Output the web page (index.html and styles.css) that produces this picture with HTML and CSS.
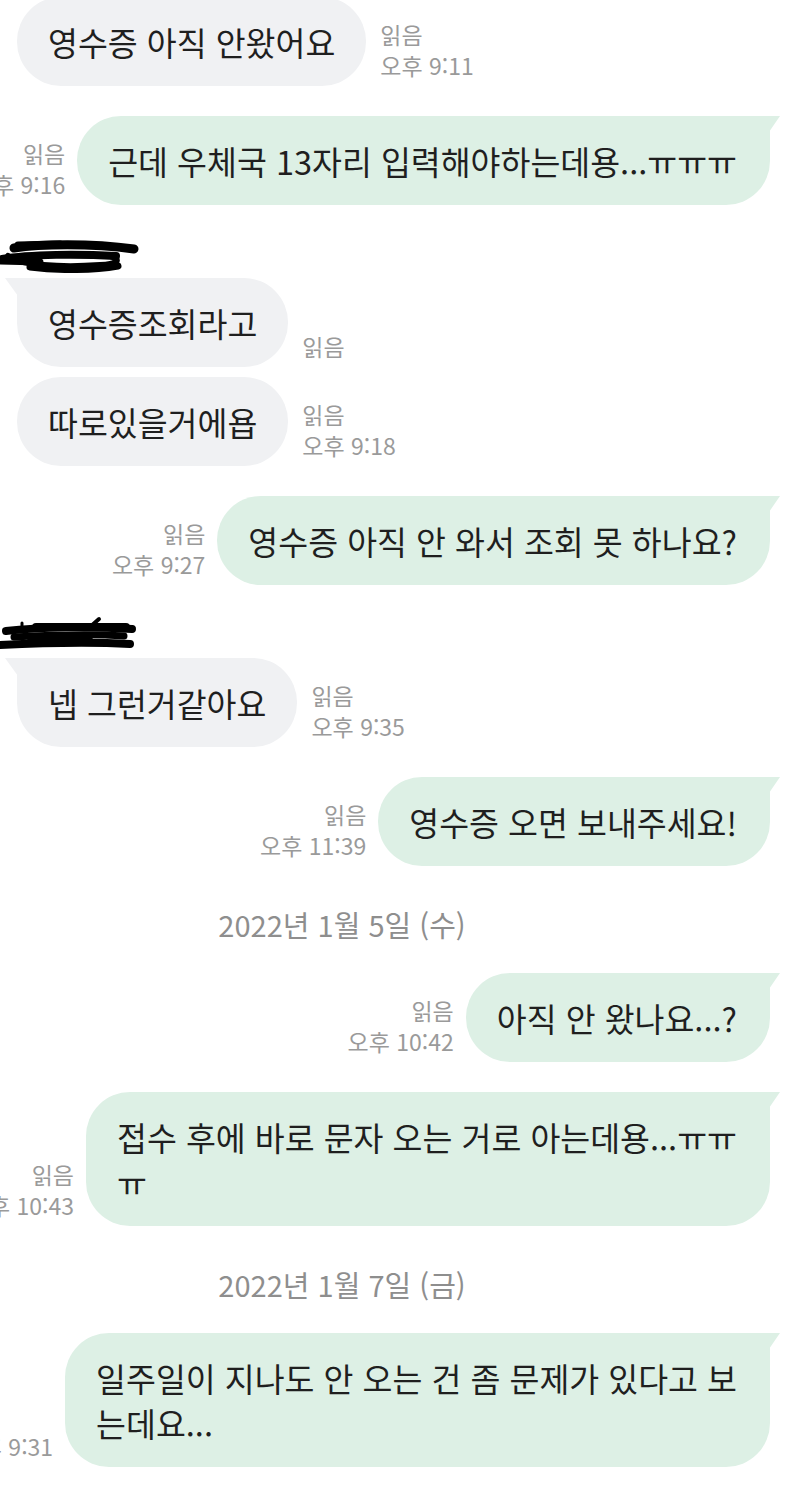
FILE: index.html
```html
<!DOCTYPE html>
<html lang="ko">
<head>
<meta charset="utf-8">
<title>Chat</title>
<link rel="stylesheet" href="styles.css">
</head>
<body>
<div class="chat">
  <div class="row in first">
    <div class="bubble in">영수증 아직 안왔어요</div>
    <div class="meta"><span>읽음</span><span>오후 9:11</span></div>
  </div>

  <div class="row out">
    <div class="meta"><span>읽음</span><span>오후 9:16</span></div>
    <div class="bubble out tail">근데 우체국 13자리 입력해야하는데용...ㅠㅠㅠ</div>
  </div>

  <div class="name">
    <svg class="scribble" width="140" height="38" viewBox="0 0 140 38">
      <g fill="none" stroke="#000" stroke-linecap="round" stroke-linejoin="round">
        <path d="M14 13 C40 9 90 8 134 14" stroke-width="9"/>
        <path d="M18 10 L60 9" stroke-width="7"/>
        <path d="M2 24 C30 19 80 19 116 21" stroke-width="8"/>
        <path d="M8 21 C20 30 60 33 100 30 C118 29 122 25 110 21" stroke-width="6"/>
        <path d="M30 32 C60 36 95 35 118 31" stroke-width="7"/>
        <path d="M0 26 L40 27" stroke-width="7"/>
      </g>
    </svg>
  </div>

  <div class="row in">
    <div class="bubble in tail">영수증조회라고</div>
    <div class="meta"><span>읽음</span></div>
  </div>

  <div class="row in grouped">
    <div class="bubble in">따로있을거에욥</div>
    <div class="meta"><span>읽음</span><span>오후 9:18</span></div>
  </div>

  <div class="row out">
    <div class="meta"><span>읽음</span><span>오후 9:27</span></div>
    <div class="bubble out tail">영수증 아직 안 와서 조회 못 하나요?</div>
  </div>

  <div class="name">
    <svg class="scribble" width="140" height="38" viewBox="0 0 140 38">
      <g fill="none" stroke="#000" stroke-linecap="round" stroke-linejoin="round">
        <path d="M6 16 C40 12 90 11 132 14" stroke-width="8"/>
        <path d="M36 12 L126 12" stroke-width="8"/>
        <path d="M90 12 L99 4" stroke-width="4"/>
        <path d="M22 12 L22 8" stroke-width="3"/>
        <path d="M14 22 C50 20 95 19 124 21" stroke-width="7"/>
        <path d="M30 26 C50 22 70 20 90 22" stroke-width="6"/>
        <path d="M0 30 C40 28 95 27 130 29" stroke-width="8"/>
      </g>
    </svg>
  </div>

  <div class="row in">
    <div class="bubble in tail">넵 그런거같아요</div>
    <div class="meta"><span>읽음</span><span>오후 9:35</span></div>
  </div>

  <div class="row out">
    <div class="meta"><span>읽음</span><span>오후 11:39</span></div>
    <div class="bubble out tail">영수증 오면 보내주세요!</div>
  </div>

  <div class="date">2022년 1월 5일 (수)</div>

  <div class="row out after-date">
    <div class="meta"><span>읽음</span><span>오후 10:42</span></div>
    <div class="bubble out tail">아직 안 왔나요...?</div>
  </div>

  <div class="row out">
    <div class="meta"><span>읽음</span><span>오후 10:43</span></div>
    <div class="bubble out tail">접수 후에 바로 문자 오는 거로 아는데용...ㅠㅠ<br>ㅠ</div>
  </div>

  <div class="date">2022년 1월 7일 (금)</div>

  <div class="row out after-date">
    <div class="meta"><span>오후 9:31</span></div>
    <div class="bubble out tail">일주일이 지나도 안 오는 건 좀 문제가 있다고 보<br>는데요...</div>
  </div>
</div>
</body>
</html>
```

FILE: styles.css
```css
* { box-sizing: border-box; }

html, body {
  margin: 0;
  padding: 0;
  background: #ffffff;
}

body {
  width: 800px;
  height: 1498px;
  overflow: hidden;
  font-family: "Noto Sans CJK KR", "Noto Sans", sans-serif;
  color: #1f1f1f;
}

.chat {
  display: flex;
  flex-direction: column;
}

.row {
  display: flex;
  align-items: flex-end;
  gap: 12px;
  margin-top: 30px;
}

.row.first { margin-top: -3px; }
.row.grouped { margin-top: 10px; }
.row.after-date { margin-top: 0; }

.row.in {
  justify-content: flex-start;
  padding-left: 17px;
}

.row.out {
  justify-content: flex-end;
  padding-right: 30px;
}

.name + .row { margin-top: 5px; }

.bubble {
  position: relative;
  flex-shrink: 0;
  white-space: nowrap;
  font-size: 32.5px;
  line-height: 45px;
  padding: 22px 31px;
  border-radius: 44px;
}

.bubble.in {
  background: #f0f1f3;
}

.bubble.out {
  background: #ddf0e5;
  padding-right: 33px;
}

.bubble.in.tail { border-top-left-radius: 0; }
.bubble.out.tail { border-top-right-radius: 0; }

.bubble.in.tail::before {
  content: "";
  position: absolute;
  left: -12px;
  top: 0;
  width: 13px;
  height: 18px;
  background: #f0f1f3;
  clip-path: polygon(0 0, 100% 0, 100% 100%);
}

.bubble.out.tail::before {
  content: "";
  position: absolute;
  right: -10px;
  top: 0;
  width: 11px;
  height: 16px;
  background: #ddf0e5;
  clip-path: polygon(0 0, 100% 0, 0 100%);
}

.meta {
  flex-shrink: 0;
  display: flex;
  flex-direction: column;
  font-size: 23px;
  line-height: 31px;
  color: #9a9a9a;
  padding-bottom: 5px;
  white-space: nowrap;
}

.row.out .meta { align-items: flex-end; }
.row.in .meta { align-items: flex-start; padding-left: 2px; }

.name {
  margin-top: 30px;
  height: 38px;
  display: flex;
  align-items: center;
}

.scribble { display: block; }

.date {
  margin-top: 40px;
  margin-bottom: 31px;
  padding-right: 116px;
  text-align: center;
  font-size: 29px;
  line-height: 36px;
  color: #8e8e8e;
}
```
